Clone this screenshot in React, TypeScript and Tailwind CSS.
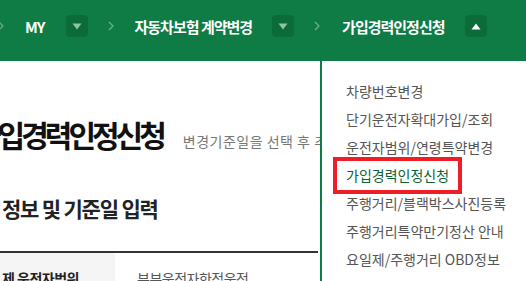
import { ReactNode } from 'react';

const FONT = { fontFamily: '"Noto Sans CJK KR", "Noto Sans", sans-serif' };

function Chevron() {
  return (
    <svg width="6" height="10" viewBox="0 0 6 10" className="shrink-0">
      <path d="M1 1l4 4-4 4" fill="none" stroke="#6fb38b" strokeWidth="1.2" />
    </svg>
  );
}

function ToggleButton({ up = false }: { up?: boolean }) {
  return (
    <div className="w-[22px] h-[22px] rounded-[4px] bg-[#0b6c3a] flex items-center justify-center shrink-0">
      {up ? (
        <svg width="10" height="7" viewBox="0 0 10 7">
          <path d="M5 0.5L9.5 6.5H0.5Z" fill="#ffffff" />
        </svg>
      ) : (
        <svg width="10" height="7" viewBox="0 0 10 7">
          <path d="M0.5 0.5H9.5L5 6.5Z" fill="#8cc7a2" />
        </svg>
      )}
    </div>
  );
}

function Crumb({ children }: { children: ReactNode }) {
  return <span className="text-white font-bold text-[15px] tracking-[-1px] leading-none whitespace-nowrap">{children}</span>;
}

const menu = [
  '차량번호변경',
  '단기운전자확대가입/조회',
  '운전자범위/연령특약변경',
  '가입경력인정신청',
  '주행거리/블랙박스사진등록',
  '주행거리특약만기정산 안내',
  '요일제/주행거리 OBD정보',
];

export default function App() {
  return (
    <div className="relative w-[526px] h-[281px] overflow-hidden bg-white" style={FONT}>
      {/* breadcrumb bar */}
      <div className="h-[61px] bg-[#0e7c44] flex items-start pt-[15px]">
        <div className="flex items-center h-[22px] -ml-[2px]">
          <Chevron />
          <div className="ml-[21px]"><Crumb>MY</Crumb></div>
          <div className="ml-[21px]"><ToggleButton /></div>
          <div className="ml-[20px]"><Chevron /></div>
          <div className="ml-[21px]"><Crumb>자동차보험 계약변경</Crumb></div>
          <div className="ml-[20px]"><ToggleButton /></div>
          <div className="ml-[20px]"><Chevron /></div>
          <div className="ml-[22px]"><Crumb>가입경력인정신청</Crumb></div>
          <div className="ml-[20px]"><ToggleButton up /></div>
        </div>
      </div>

      {/* page body */}
      <div className="w-[320px] pt-[51px]">
        <div className="h-[44px] flex items-center -ml-[26px] whitespace-nowrap">
          <div className="flex items-baseline">
            <h1 className="text-[30px] font-bold text-[#111] tracking-[-4px] leading-[36px]">가입경력인정신청</h1>
            <span className="ml-[20px] text-[14px] text-[#777] tracking-[0.5px]">변경기준일을 선택 후 추가하세요</span>
          </div>
        </div>
        <div className="mt-[32px] h-[40px] flex items-center pl-[2px]">
          <h2 className="text-[21px] font-bold text-[#222] tracking-[-1.2px] leading-[24px] whitespace-nowrap">
            정보 및 기준일 입력
          </h2>
        </div>
        <div className="mt-[23px] h-[2px] bg-[#333] w-[318px]" />
        <div className="flex h-[40px]">
          <div className="w-[115px] bg-[#f5f5f5] pt-[15px] pl-[2px] text-[14px] leading-[20px] font-bold text-[#222] tracking-[-0.5px] whitespace-nowrap">
            제 운전자범위
          </div>
          <div className="pt-[15px] pl-[22px] text-[14px] leading-[20px] text-[#555] tracking-[-0.5px] whitespace-nowrap">
            부부운전자한정운전
          </div>
        </div>
      </div>

      {/* open dropdown menu */}
      <div className="absolute left-[320px] top-[61px] w-[220px] h-[230px] bg-white border-l-2 border-[#0e7c44] pt-[16px] pl-[24px]">
        <ul className="flex flex-col">
          {menu.map((m, i) => (
            <li key={m} className="h-[28px] flex items-center">
              {i === 3 ? (
                <span className="-ml-[13px] px-[9px] py-[4px] border-[4px] border-[#ee1d26] text-[#0b6236] text-[14px] leading-[21px] whitespace-nowrap">
                  {m}
                </span>
              ) : (
                <span className="text-[#555] text-[14px] whitespace-nowrap">{m}</span>
              )}
            </li>
          ))}
        </ul>
      </div>
    </div>
  );
}
